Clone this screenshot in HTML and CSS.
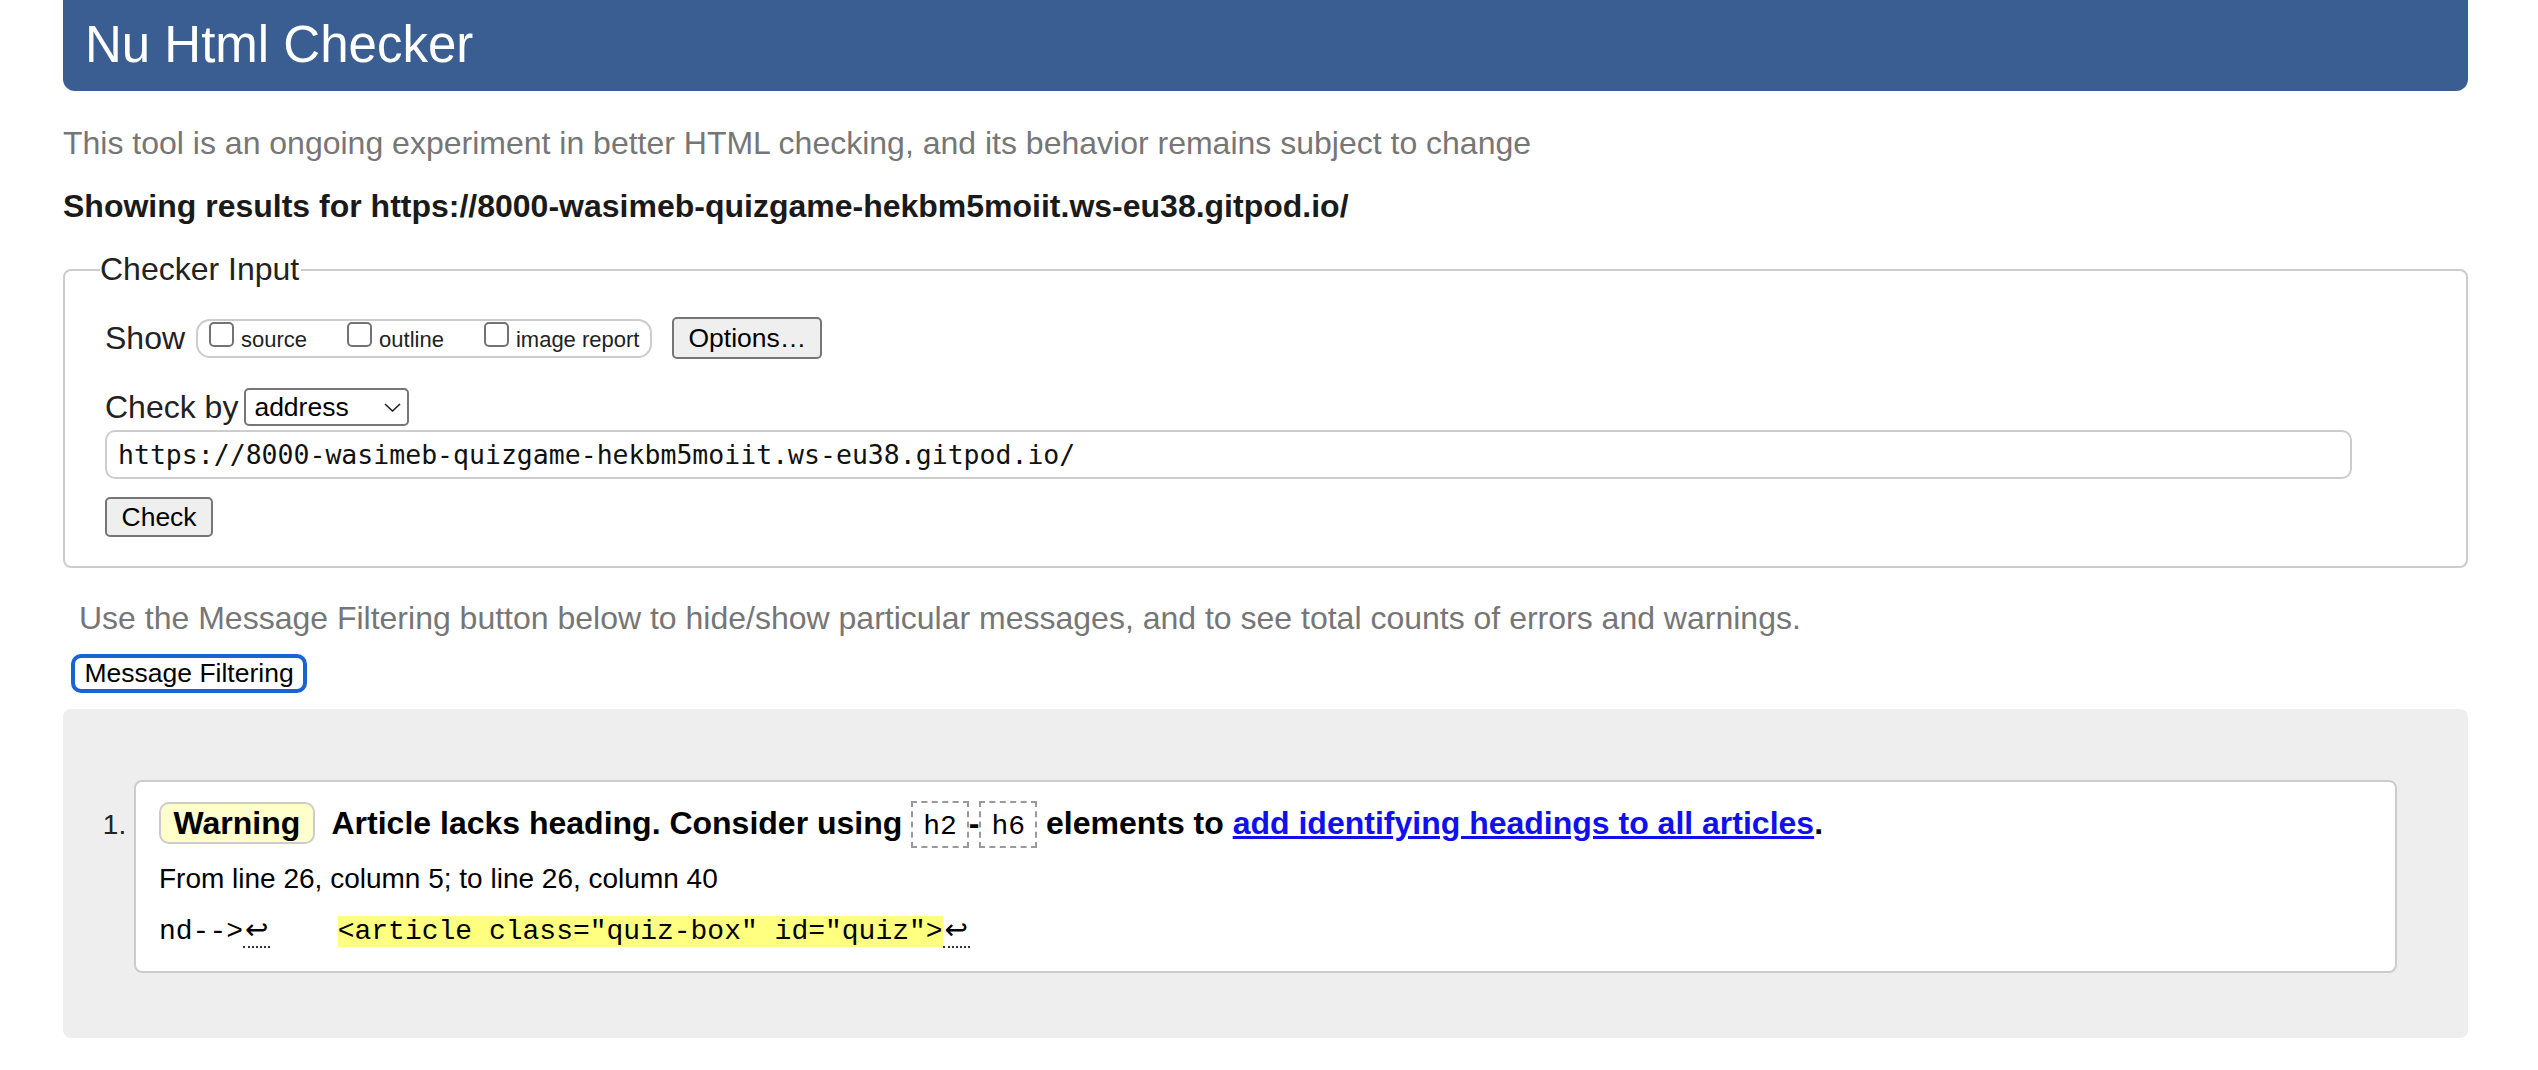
FILE: index.html
```html
<!DOCTYPE html>
<html lang="en">
<head>
<meta charset="utf-8">
<title>Nu Html Checker</title>
<link rel="stylesheet" href="styles.css">
</head>
<body>
<h1 class="title">Nu Html Checker</h1>
<p class="intro">This tool is an ongoing experiment in better HTML checking, and its behavior remains subject to change</p>
<p class="showing">Showing results for https://8000-wasimeb-quizgame-hekbm5moiit.ws-eu38.gitpod.io/</p>
<form class="checker">
<fieldset class="input-set">
<legend class="legend">Checker Input</legend>
<div class="show-row">
<span class="show-label">Show</span>
<span class="pill"><label class="opt"><input type="checkbox" class="cb">source</label><label class="opt"><input type="checkbox" class="cb">outline</label><label class="opt"><input type="checkbox" class="cb">image report</label></span>
<button type="button" class="btn opts">Options…</button>
</div>
<div class="by-row">
<span class="by-label">Check by</span>
<span class="select-wrap"><select class="select"><option>address</option></select><svg class="chev" width="17" height="9" viewBox="0 0 17 9"><path d="M1 1 L8.5 8 L16 1" fill="none" stroke="#222" stroke-width="1.6"/></svg></span>
</div>
<input class="url" type="text" value="https://8000-wasimeb-quizgame-hekbm5moiit.ws-eu38.gitpod.io/">
<button type="button" class="btn check">Check</button>
</fieldset>
</form>
<p class="filter-note">Use the Message Filtering button below to hide/show particular messages, and to see total counts of errors and warnings.</p>
<button type="button" class="filter-btn">Message Filtering</button>
<div class="results">
<ol class="messages">
<li class="msg">
<p class="msg-line"><strong class="badge">Warning</strong> Article lacks heading. Consider using <code class="tag">h2</code>-<code class="tag">h6</code> elements to <a class="ref" href="#">add identifying headings to all articles</a>.</p>
<p class="location">From line 26, column 5; to line 26, column 40</p>
<p class="extract"><code>nd--&gt;<span class="lf">↩</span>    <b class="hl">&lt;article class="quiz-box" id="quiz"&gt;</b><span class="lf">↩</span></code></p>
</li>
</ol>
</div>
</body>
</html>
```
FILE: styles.css
```css
* { box-sizing: border-box; }
body {
  margin: 0 70px 0 63px;
  font-family: "Liberation Sans", Arial, sans-serif;
  color: #000;
  background: #fff;
}
.title {
  margin: 0;
  height: 91px;
  padding: 16px 22px 0;
  background: #3a5e91;
  color: #fff;
  font-size: 51px;
  font-weight: normal;
  line-height: 57px;
  border-radius: 0 0 12px 12px;
}
.intro {
  margin: 34px 0 0;
  font-size: 32px;
  line-height: 37px;
  color: #767676;
}
.showing {
  margin: 26px 0 0;
  font-size: 32px;
  line-height: 37px;
  font-weight: bold;
  color: #1a1a1a;
}
.checker { margin: 26px 0 0; }
.input-set {
  margin: 0;
  min-width: 0;
  padding: 29px 40px 29px;
  border: 2px solid #ccc;
  border-radius: 8px;
}
.legend {
  font-size: 32px;
  line-height: 37px;
  padding: 0 2px 0 0;
  margin-left: -5px;
  color: #222;
}
.show-row {
  display: flex;
  align-items: center;
  height: 42px;
}
.show-label {
  font-size: 32px;
  line-height: 37px;
  margin-right: 11px;
  color: #222;
}
.pill {
  border: 2px solid #ccc;
  border-radius: 14px;
  padding: 1px 11px 0;
  font-size: 22px;
  line-height: 32px;
  color: #222;
  white-space: nowrap;
}
.opt + .opt { margin-left: 40px; }
.cb {
  -webkit-appearance: none;
  appearance: none;
  display: inline-block;
  width: 25px;
  height: 25px;
  margin: 0 7px 0 0;
  border: 2px solid #737373;
  border-radius: 5px;
  background: #fff;
  vertical-align: baseline;
}
.btn {
  font-family: "Liberation Sans", Arial, sans-serif;
  font-size: 26.5px;
  color: #000;
  background: #efefef;
  border: 2px solid #767676;
  border-radius: 5px;
  padding: 0 14px;
}
.opts {
  height: 42px;
  margin-left: 20px;
}
.by-row {
  display: flex;
  align-items: center;
  height: 38px;
  margin-top: 29px;
}
.by-label {
  font-size: 32px;
  line-height: 37px;
  margin-right: 6px;
  color: #222;
}
.select-wrap { position: relative; height: 38px; }
.select {
  -webkit-appearance: none;
  appearance: none;
  width: 165px;
  height: 38px;
  margin: 0;
  border: 2px solid #767676;
  border-radius: 5px;
  padding: 0 0 0 8px;
  font-family: "Liberation Sans", Arial, sans-serif;
  font-size: 26.5px;
  color: #000;
  background: #fff;
}
.chev {
  position: absolute;
  left: 140px;
  top: 15px;
  pointer-events: none;
}
.url {
  display: block;
  margin: 4px 0 0;
  width: calc(100% - 74px);
  height: 49px;
  border: 2px solid #ccc;
  border-radius: 10px;
  padding: 0 11px;
  font-family: "DejaVu Sans Mono", monospace;
  font-size: 26.5px;
  color: #111;
  background: #fff;
}
.check {
  display: block;
  margin-top: 18px;
  height: 40px;
  padding: 0 14.5px;
}
.filter-note {
  margin: 32px 0 0 16px;
  font-size: 32px;
  line-height: 37px;
  color: #767676;
}
.filter-btn {
  display: block;
  margin: 17px 0 0 8px;
  height: 39px;
  padding: 0 9.5px;
  border: 4px solid #1a64d2;
  border-radius: 10px;
  background: #fff;
  font-family: "Liberation Sans", Arial, sans-serif;
  font-size: 26.5px;
  color: #000;
}
.results {
  margin-top: 16px;
  background: #eee;
  border-radius: 8px;
  padding: 71px 71px 65px;
}
.messages {
  margin: 0;
  padding: 0;
  list-style: decimal outside;
}
.msg {
  background: #fff;
  border: 2px solid #ccc;
  border-radius: 8px;
  padding: 16px 23px 19px;
  font-size: 28px;
  color: #000;
}
.msg::marker { color: #222; }
.msg-line {
  margin: 0;
  font-size: 32px;
  line-height: 50px;
  font-weight: bold;
}
.badge {
  display: inline-block;
  padding: 0 12.5px;
  line-height: 38px;
  border: 2px solid #ccc;
  border-radius: 10px;
  background: #ffffcc;
  margin-right: 9px;
}
.tag {
  display: inline-block;
  font-family: "Liberation Mono", monospace;
  font-size: 28px;
  font-weight: normal;
  line-height: 39px;
  padding: 4px 10px 0;
  border: 2px dashed #999;
}
.ref { color: #1010ee; text-decoration: underline; }
.location {
  margin: 11px 0 0;
  line-height: 40px;
  font-size: 28px;
}
.extract {
  margin: 11px 0 0;
  line-height: 40px;
  font-family: "Liberation Mono", monospace;
  font-size: 28px;
  white-space: pre;
}
.extract code { font-family: inherit; font-size: inherit; }
.hl { background: #ffff80; font-weight: normal; }
.lf {
  font-family: "DejaVu Sans", sans-serif;
  padding: 0 2px;
  border-bottom: 2px dotted #333;
}
```
